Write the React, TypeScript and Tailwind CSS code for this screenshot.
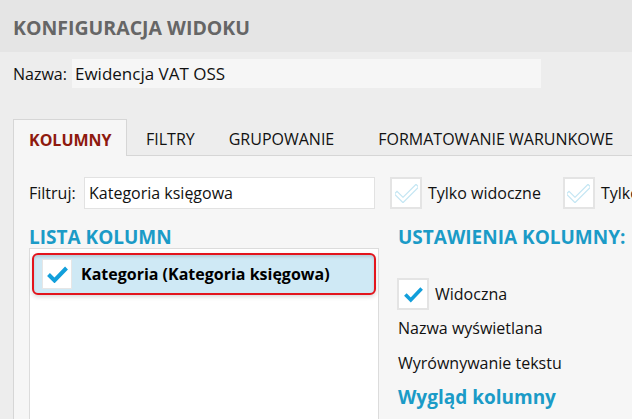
import React from "react";

const font = { fontFamily: '"Open Sans", "Noto Sans", sans-serif' };

function Check({ pale, w, h }: { pale?: boolean; w: number; h: number }) {
  if (pale) {
    return (
      <svg width={w} height={h} viewBox="0 0 23 19">
        <path d="M2 10 L8 16 L21 3" fill="none" stroke="#c4e6f3" strokeWidth="5" strokeLinecap="square" strokeLinejoin="miter" />
        <path d="M2 10 L8 16 L21 3" fill="none" stroke="#ffffff" strokeWidth="2.6" strokeLinecap="square" strokeLinejoin="miter" />
      </svg>
    );
  }
  return (
    <svg width={w} height={h} viewBox="0 0 21 17">
      <path d="M1.5 8.5 L7.5 14.5 L19.5 2" fill="none" stroke="#129fdb" strokeWidth="4" strokeLinecap="butt" strokeLinejoin="miter" />
    </svg>
  );
}

export default function App() {
  return (
    <div className="w-[632px] h-[419px] overflow-hidden bg-[#ededed] flex flex-col text-[#111]" style={font}>
      <div className="h-[52px] shrink-0 bg-[#e5e5e5] flex items-center pl-[13px] pt-[3px]">
        <span className="text-[19.5px] font-bold text-[#666]">KONFIGURACJA WIDOKU</span>
      </div>
      <div className="mt-[7px] h-[29px] flex items-center shrink-0">
        <span className="pl-[13px] w-[72px] text-[16px]">Nazwa:</span>
        <div className="w-[469px] h-[29px] bg-[#f6f6f6] flex items-center pl-[3px] text-[17px]">Ewidencja VAT OSS</div>
      </div>
      <div className="mt-[31px] ml-[13px] flex h-[37px] shrink-0 border-b border-[#d6d6d6] text-[16px] whitespace-nowrap">
        <div className="w-[114px] h-[38px] -mb-px bg-[#f6f6f6] border border-b-0 border-[#d6d6d6] flex items-center pl-[15px] pt-[3px] font-bold text-[#8e1a0e]">KOLUMNY</div>
        <div className="flex items-center pl-[19px] pt-[3px]">FILTRY</div>
        <div className="flex items-center pl-[34px] pt-[3px]">GRUPOWANIE</div>
        <div className="flex items-center pl-[44px] pt-[3px]">FORMATOWANIE WARUNKOWE</div>
      </div>
      <div className="ml-[13px] flex-1 bg-[#f6f6f6] border-l border-[#d6d6d6] pt-[21px] text-[16px]">
        <div className="flex items-center h-[32px] whitespace-nowrap">
          <span className="pl-[15px] w-[70px] shrink-0">Filtruj:</span>
          <div className="w-[291px] h-[32px] shrink-0 bg-white border border-[#e2e2e2] flex items-center pl-[4px]">Kategoria księgowa</div>
          <div className="ml-[15px] w-[32px] h-[32px] bg-white border-2 border-[#e4e4e4] flex items-center justify-center shrink-0">
            <Check pale w={23} h={19} />
          </div>
          <span className="ml-[6px]">Tylko widoczne</span>
          <div className="ml-[22px] w-[32px] h-[32px] bg-white border-2 border-[#e4e4e4] flex items-center justify-center shrink-0">
            <Check pale w={23} h={19} />
          </div>
          <span className="ml-[6px]">Tylko niewidoczne</span>
        </div>
        <div className="flex mt-[16px]">
          <div className="w-[365px] pl-[15px] shrink-0">
            <div className="text-[19px] font-bold text-[#1b9bc7] leading-[24px]">LISTA KOLUMN</div>
            <div className="mt-[-1px] w-[350px] h-[200px] bg-white border border-[#dcdcdc] p-[2px] pt-[4px]">
              <div className="h-[42px] rounded-[6px] border-2 border-[#e3141c] bg-[#cfe9f5] shadow-[inset_0_2px_3px_rgba(0,0,0,0.12),0_2px_4px_rgba(0,0,0,0.15)] flex items-center pl-[8px]">
                <div className="w-[30px] h-[30px] bg-white border border-[#e6e6e6] flex items-center justify-center">
                  <Check w={21} h={17} />
                </div>
                <span className="ml-[9px] font-bold text-[16px] text-black whitespace-nowrap">Kategoria (Kategoria księgowa)</span>
              </div>
            </div>
          </div>
          <div className="pl-[19px] whitespace-nowrap">
            <div className="text-[19px] font-bold text-[#1b9bc7] leading-[24px]">USTAWIENIA KOLUMNY:</div>
            <div className="mt-[29px] flex items-center h-[32px] -ml-[1px]">
              <div className="w-[32px] h-[32px] bg-white border-2 border-[#e4e4e4] flex items-center justify-center">
                <Check w={19} h={17} />
              </div>
              <span className="ml-[6px]">Widoczna</span>
            </div>
            <div className="mt-[3px] h-[30px] flex items-center">Nazwa wyświetlana</div>
            <div className="mt-[5px] h-[30px] flex items-center">Wyrównywanie tekstu</div>
            <div className="mt-[4px] h-[30px] flex items-center text-[19px] font-bold text-[#1b9bc7]">Wygląd kolumny</div>
          </div>
        </div>
      </div>
    </div>
  );
}
